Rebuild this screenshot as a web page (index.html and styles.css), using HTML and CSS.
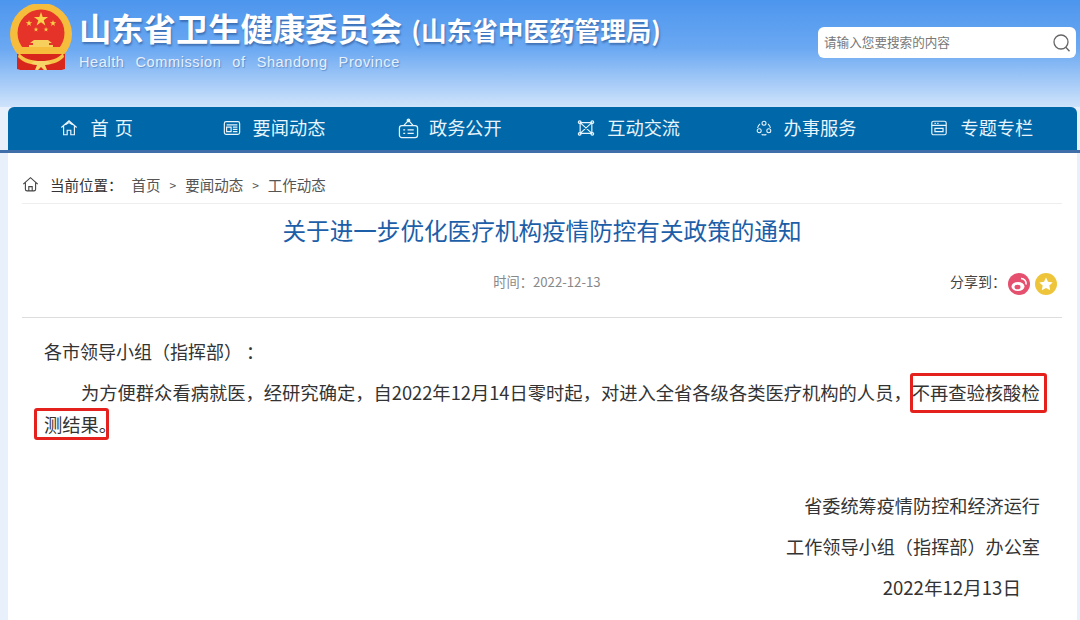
FILE: index.html
```html
<!DOCTYPE html>
<html lang="zh-CN">
<head>
    <meta charset="UTF-8">
    <meta name="viewport" content="width=device-width, initial-scale=1.0">
    <title>山东省卫生健康委员会</title>
    <link rel="stylesheet" href="styles.css">
</head>
<body>
    <header class="top">
        <div class="brand">
            <svg class="emblem" viewBox="0 0 62 67" xmlns="http://www.w3.org/2000/svg">
                <path d="M7 44h48v21c-5 1.500-10 1-14-1H21c-4 2-9 2.500-14 1z" fill="#d9261c"/>
                <circle cx="31" cy="30" r="31" fill="#f6bd3c"/>
                <circle cx="31" cy="29" r="23.500" fill="#e5332a"/>
                <path d="M31 8l1.700 5h5.400l-4.400 3.200 1.700 5.200-4.400-3.200-4.400 3.200 1.700-5.200-4.400-3.200h5.400z" fill="#f9d24a"/>
                <path d="M19 16l.8 2.300h2.400l-2 1.400.8 2.300-2-1.400-2 1.400.8-2.300-2-1.400h2.400zM43 16l.8 2.300h2.400l-2 1.400.8 2.300-2-1.400-2 1.400.8-2.300-2-1.400h2.400zM26 23l.6 1.700h1.800l-1.500 1 .6 1.800-1.500-1.100-1.500 1.100.6-1.800-1.500-1h1.800zM36 23l.6 1.700h1.800l-1.500 1 .6 1.800-1.500-1.100-1.500 1.100.6-1.800-1.500-1h1.800z" fill="#f9d24a"/>
                <path d="M24 36h14l4 3h-3v2h4v3H19v-3h4v-2h-3z" fill="#f7cf5c"/>
                <path d="M9 43h44v3c-5 5-13 6-22 6S14 51 9 46z" fill="#f6bd3c"/>
                <path d="M7 50h48v9l-3 7H10l-3-7z" fill="#d9261c"/>
                <path d="M9 49c5 6 13 8 22 8s17-2 22-8l1 4c-5 6-14 8-23 8S13 59 8 53z" fill="#f6c548"/>
                <path d="M24 57h14l3 3-6 1 2 5h-3l-3-3-3 3h-3l2-5-6-1z" fill="#f7d468"/>
            </svg>
            <div class="brand-text">
                <h1 class="site-name">山东省卫生健康委员会 <small>(山东省中医药管理局)</small></h1>
                <p class="site-en">Health Commission of Shandong Province</p>
            </div>
        </div>
        <div class="search-box">
            <input type="text" placeholder="请输入您要搜索的内容">
            <svg class="search-icon" viewBox="0 0 20 20" xmlns="http://www.w3.org/2000/svg">
                <circle cx="9" cy="9" r="7"/>
                <path d="M13.800 14.200l3.700 4"/>
            </svg>
        </div>
    </header>

    <nav class="nav">
        <a href="#">
            <svg viewBox="0 0 20 20" xmlns="http://www.w3.org/2000/svg"><path d="M1.500 9.500L10 2l8.500 7.500M4 8v9.500h4v-5h4v5h4V8M6 6.500L10 4l4 2.500"/></svg>
            <span class="home-label">首页</span>
        </a>
        <a href="#">
            <svg viewBox="0 0 20 20" xmlns="http://www.w3.org/2000/svg"><rect x="1.500" y="3" width="17" height="14" rx="2"/><path d="M4 6.500h12M4 9h5v5H4zM11 9h5M11 11.500h5M11 14h5"/></svg>
            <span>要闻动态</span>
        </a>
        <a href="#" class="nudge">
            <svg class="wide" viewBox="0 0 22 22" xmlns="http://www.w3.org/2000/svg"><rect x="1.500" y="8" width="19" height="12.500" rx="2.500"/><path d="M6 8l5-5.500L16 8M5.500 12.500h2M5.500 16h2M10 12.500h6.500M10 16h6.500"/><circle cx="11" cy="2.500" r="1.300"/></svg>
            <span>政务公开</span>
        </a>
        <a href="#">
            <svg viewBox="0 0 20 20" xmlns="http://www.w3.org/2000/svg"><path d="M3.500 4h13v12h-13zM3.500 4L16.500 16M16.500 4L3.500 16"/><circle cx="3" cy="3.500" r="1.500"/><circle cx="17" cy="3.500" r="1.500"/><circle cx="3" cy="16.500" r="1.500"/><circle cx="17" cy="16.500" r="1.500"/></svg>
            <span>互动交流</span>
        </a>
        <a href="#">
            <svg class="small" viewBox="0 0 20 20" xmlns="http://www.w3.org/2000/svg"><circle cx="10" cy="4" r="2.500"/><circle cx="4" cy="13.500" r="2.500"/><circle cx="16" cy="13.500" r="2.500"/><path d="M5 5a8 8 0 0 0-3 5M15 5a8 8 0 0 1 3 5M7 18a8 8 0 0 0 6 0"/></svg>
            <span>办事服务</span>
        </a>
        <a href="#" class="nudge">
            <svg viewBox="0 0 20 20" xmlns="http://www.w3.org/2000/svg"><rect x="2" y="2.500" width="16" height="15" rx="2"/><path d="M2 7h16M5 4.800h1.500M8 4.800h1.500M5.500 10.500h9v3.500h-9z"/></svg>
            <span>专题专栏</span>
        </a>
    </nav>
    <div class="nav-edge"></div>

    <main class="panel">
        <div class="crumbs">
            <svg class="crumb-home" viewBox="0 0 20 20" xmlns="http://www.w3.org/2000/svg"><path d="M1.500 9.500L10 2l8.500 7.500M4 8v7.500a2 2 0 0 0 2 2h8a2 2 0 0 0 2-2V8M8 17.500v-5h4v5"/></svg>
            <span class="crumb-label">当前位置：</span>
            <a href="#">首页</a>
            <i>&gt;</i>
            <a href="#">要闻动态</a>
            <i>&gt;</i>
            <a href="#">工作动态</a>
        </div>

        <h2 class="title">关于进一步优化医疗机构疫情防控有关政策的通知</h2>

        <div class="meta">
            <span class="date">时间：2022-12-13</span>
            <div class="share">
                <span class="share-label">分享到：</span>
                <span class="share-btn weibo">
                    <svg viewBox="0 0 22 22" xmlns="http://www.w3.org/2000/svg"><ellipse cx="10" cy="13.500" rx="6.500" ry="4.500" fill="#fff"/><ellipse cx="9.500" cy="14" rx="3" ry="2.300" fill="#e5506e"/><path d="M13 5.500a5 5 0 0 1 5 6" fill="none" stroke="#fff" stroke-width="1.600"/></svg>
                </span>
                <span class="share-btn star">
                    <svg viewBox="0 0 22 22" xmlns="http://www.w3.org/2000/svg"><path d="M11 4.500l2 4.300 4.700.6-3.400 3.200.9 4.600-4.200-2.300-4.200 2.300.9-4.600-3.400-3.200 4.700-.6z" fill="#fff"/></svg>
                </span>
            </div>
        </div>

        <article class="article">
            <p class="greet">各市领导小组（指挥部）&nbsp;：</p>
            <p class="para">为方便群众看病就医，经研究确定，自2022年12月14日零时起，对进入全省各级各类医疗机构的人员，<span class="mark mark-a">不再查验核酸检</span><span class="mark mark-b">测结果。</span></p>
            <div class="sign">
                <p>省委统筹疫情防控和经济运行</p>
                <p>工作领导小组（指挥部）办公室</p>
                <p class="sign-date">2022年12月13日</p>
            </div>
        </article>
    </main>
</body>
</html>
```

FILE: styles.css
```css
html, body {
    height: 100%;
    overflow: hidden;
}
body {
    margin: 0;
    font-family: "Noto Sans CJK SC", "Liberation Sans", sans-serif;
    color: #333;
    background: #e8f0fc;
}
p, h1, h2 {
    margin: 0;
}
a {
    color: inherit;
    text-decoration: none;
}
.top {
    display: flex;
    justify-content: space-between;
    height: 107px;
    padding: 4px 4px 0 10px;
    box-sizing: border-box;
    background: linear-gradient(to bottom, #4d96ee, #6aa8f2 45%, #cfe3fb);
}
.brand {
    display: flex;
    gap: 7px;
}
.emblem {
    width: 62px;
    height: 67px;
}
.site-name {
    margin-top: 1px;
    font-size: 32.300px;
    line-height: 44px;
    font-weight: 700;
    color: #fff;
    white-space: nowrap;
    text-shadow: 1px 2px 2px rgba(40, 80, 140, .6);
}
.site-name small {
    margin-left: 2px;
    font-size: 25.600px;
}
.site-en {
    font-family: "Liberation Sans", sans-serif;
    font-size: 14.500px;
    line-height: 20px;
    letter-spacing: 0.600px;
    word-spacing: 6.400px;
    color: #e6f0fc;
    text-shadow: 1px 1px 1px rgba(60, 100, 160, .5);
}
.search-box {
    display: flex;
    align-items: center;
    width: 258px;
    height: 31px;
    margin-top: 23px;
    padding: 0 4px;
    box-sizing: border-box;
    background: #fff;
    border-radius: 6px;
}
.search-box input {
    flex: 1;
    min-width: 0;
    border: none;
    outline: none;
    background: none;
    font-family: inherit;
    font-size: 12.600px;
    line-height: 16px;
    padding: 0 2px 2px;
    color: #666;
}
.search-box input::placeholder {
    color: #777;
}
.search-icon {
    width: 20px;
    height: 20px;
    fill: none;
    stroke: #666;
    stroke-width: 1.300;
}
.nav {
    display: grid;
    grid-template-columns: repeat(6, 1fr);
    height: 43px;
    margin: 0 3px 0 8px;
    padding-right: 5px;
    background: #0068a8;
    border-radius: 6px 6px 0 0;
}
.nav a {
    display: flex;
    align-items: center;
    justify-content: center;
    gap: 12px;
    padding-bottom: 3px;
    color: #e8f4fc;
    font-size: 18.200px;
}
.nav a.nudge {
    padding-right: 3px;
}
.nav svg {
    width: 18px;
    height: 18px;
    margin-top: 2px;
    fill: none;
    stroke: #e8f4fc;
    stroke-width: 1.300;
}
.nav svg.wide {
    width: 21px;
    height: 21px;
    margin-right: -2px;
}
.nav svg.small {
    width: 16px;
    height: 16px;
}
.home-label {
    letter-spacing: 6px;
    margin-right: -6px;
}
.nav-edge {
    height: 3px;
    background: #3f6ea8;
}
.panel {
    margin: 0 3px 0 8px;
    padding: 0 15px 0 14px;
    height: 467px;
    background: #fff;
}
.crumbs {
    display: flex;
    align-items: center;
    height: 51px;
    padding-top: 12px;
    font-size: 14.500px;
    color: #555;
    border-bottom: 1px solid #eee;
    box-sizing: border-box;
}
.crumb-home {
    width: 17px;
    height: 17px;
    margin-right: 11px;
    fill: none;
    stroke: #444;
    stroke-width: 1.300;
}
.crumb-label {
    color: #333;
    margin-right: 9px;
}
.crumbs i {
    font-style: normal;
    font-size: 12px;
    margin: 0 9px;
}
.title {
    margin-top: 8px;
    font-size: 23.600px;
    line-height: 36px;
    font-weight: 400;
    text-align: center;
    color: #1c5ea8;
}
.meta {
    position: relative;
    display: flex;
    justify-content: center;
    align-items: center;
    height: 66px;
    padding-left: 10px;
    padding-bottom: 3px;
    border-bottom: 1px solid #ddd;
}
.date {
    font-size: 13.200px;
    color: #888;
}
.share {
    position: absolute;
    right: 5px;
    top: 25px;
    display: flex;
    align-items: center;
    gap: 5px;
    font-size: 14px;
    color: #444;
}
.share-label {
    position: relative;
    top: -3px;
    margin-right: -3px;
}
.share-btn {
    display: block;
    width: 22px;
    height: 22px;
    border-radius: 50%;
}
.share-btn svg {
    display: block;
}
.weibo {
    background: #e5506e;
}
.star {
    background: #eec53a;
}
.article {
    padding: 17px 22px 0 22px;
    font-size: 18px;
    line-height: 32px;
    color: #333;
}
.para {
    margin-top: 9px;
    font-size: 18.300px;
    text-indent: 37px;
}
.mark {
    position: relative;
}
.mark::after {
    content: "";
    position: absolute;
    border: 3px solid #e5211d;
    border-radius: 3px;
}
.mark-a::after {
    top: -6px;
    bottom: -8px;
    left: -2px;
    right: -7px;
}
.mark-b::after {
    top: -3px;
    bottom: -3px;
    left: -10px;
    right: 8px;
}
.sign {
    margin-top: 49px;
    font-size: 18.150px;
    text-align: right;
}
.sign p {
    margin-bottom: 9px;
}
.sign-date {
    padding-right: 19px;
    font-size: 18.600px;
}
```
